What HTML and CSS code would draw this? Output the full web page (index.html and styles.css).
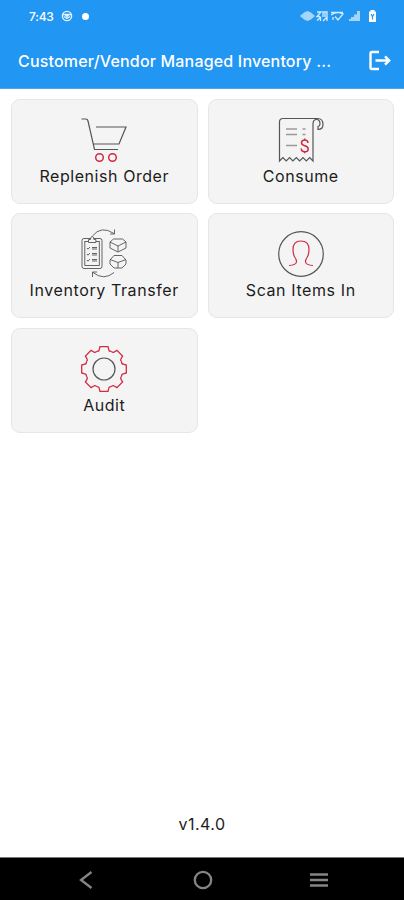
FILE: index.html
```
<!DOCTYPE html>
<html lang="en">
<head>
    <meta charset="UTF-8">
    <meta name="viewport" content="width=device-width, initial-scale=1.0">
    <title>Customer/Vendor Managed Inventory</title>
    <link rel="stylesheet" href="styles.css">
</head>
<body>
    <header class="header">
        <div class="status-bar">
            <span class="time">7:43</span>
            <svg class="status-app" width="12" height="12" viewBox="0 0 12 12">
                <circle cx="6" cy="6" r="4.6"/>
                <path d="M2 4.5h8M3 6.5l3 2 3-2M4 4.5l2 2 2-2"/>
            </svg>
            <span class="dot"></span>
            <svg class="status-icons" width="78" height="16" viewBox="0 0 78 16">
                <path class="soft" d="M0 8l4-3.5 3.500-1.500 3.500 1.500 4 3.500-4 3.500-3.500 1.500-3.500-1.500z"/>
                <path class="line" d="M17 4h4l-4 4.500h3M17 12.500l3.500-3v3.500M23 9V4h4v5l-4 4M25 5v4M27 8v5"/>
                <path class="line" d="M31 4.500h12M31 7q6-4 12-1l-5 6-3-3.500M33 9v3"/>
                <path class="soft" d="M49 13v-2h2V9h3V6.500h3V3h3v10z"/>
                <path class="fill" d="M69 3.500h1.500V2h4v1.500H76V14h-7z"/>
                <path class="bolt" d="M71 6l1.500 2.500L74 6M72.500 8.500v3"/>
            </svg>
        </div>
        <div class="title-bar">
            <h1>Customer/Vendor Managed Inventory ...</h1>
            <svg class="logout" width="24" height="22" viewBox="0 0 24 22">
                <path d="M11 2H4Q2.500 2 2.500 3.500v14Q2.500 19 4 19h7M7.500 10.500H21M17 6.300l4.200 4.200-4.200 4.200"/>
            </svg>
        </div>
    </header>

    <main class="menu">
        <a class="card">
            <svg class="icon" width="46" height="46" viewBox="0 0 46 46">
                <path d="M.500 2h4.500Q6.500 2 7 4l6.500 28.500H37M15 10h30l-7 17H12.500"/>
                <g class="red bold">
                    <circle cx="18.500" cy="40.500" r="3.800"/>
                    <circle cx="31.500" cy="40.500" r="3.800"/>
                </g>
            </svg>
            <span class="label">Replenish Order</span>
        </a>
        <a class="card">
            <svg class="icon" width="46" height="46" viewBox="0 0 46 46">
                <path d="M1.500 44V5q0-3.500 3.500-3.500h34.500q5.500 0 5.500 6 0 5-5 5v-3q2-.500 2-2.500 0-4.500-3.500-4.500-3.500 0-3.500 4.500V44l-3.300-3.500-3.400 3.500-3.300-3.500-3.400 3.500-3.300-3.500-3.400 3.500-3.300-3.500-3.400 3.500-3.300-3.500z"/>
                <path class="grey" d="M8 12h11M8 17.500h11M8 28.500h11M24.500 12h3M24.500 17.500h3"/>
                <path class="red bold" d="M30 26q-.200-3-3.300-3-3.200 0-3.200 2.800 0 2.200 3.200 2.900 3.500.800 3.500 3.200 0 2.800-3.500 2.800-3.400 0-3.500-3.200M26.700 21.500V23M26.700 34.700v1.500"/>
            </svg>
            <span class="label">Consume</span>
        </a>
        <a class="card">
            <svg class="icon transfer" width="46" height="50" viewBox="0 0 46 50">
                <g class="thin">
                    <rect x="1" y="9.500" width="20" height="30" rx="2"/>
                    <rect x="3.800" y="12.500" width="14.500" height="24"/>
                    <path class="clip" d="M7.500 13.500v-3h2q0-3 1.700-3t1.700 3h2v3z"/>
                    <path d="M6 19l1 1.200 2-2.200M6 25l1 1.200 2-2.200M6 31l1 1.200 2-2.200M11 18.500h5M11 20h5M11 24.500h5M11 26h5M11 30.500h5M11 32h5"/>
                    <path d="M11.500 7Q20-4 33 4.500M33.500.500V5H29"/>
                    <path d="M33 43.500Q23 52 12 43.500M11.500 48v-5H16"/>
                    <path d="M29 13l3.500-3h9l3.500 3v6l-8 4-8-4zM29 13l8 4 8-4M37 17v6"/>
                    <path d="M29 31l4-4.500h8l4 4.500v4l-4 4h-8l-4-4zM29 30.500l8 3 8-3M37 33.500v5.500"/>
                </g>
            </svg>
            <span class="label wide">Inventory Transfer</span>
        </a>
        <a class="card">
            <svg class="icon" width="46" height="46" viewBox="0 0 46 46">
                <circle cx="23" cy="23" r="22.300"/>
                <path class="red" d="M11 34.500q7-.500 7.500-3.500 0-2.500-1.500-4.500-2-3-2-8 0-8.500 8-8.500t8 8.500q0 5-2 8-1.500 2-1.500 4.500.5 3 7.500 3.500"/>
            </svg>
            <span class="label wide">Scan Items In</span>
        </a>
        <a class="card">
            <svg class="icon" width="46" height="46" viewBox="-23 -23 46 46">
                <defs>
                    <path id="tooth" d="M-7.300-17.600Q-5-17.500-4.800-19.200L-4-22.300H4L4.800-19.200Q5-17.500 7.300-17.600"/>
                </defs>
                <circle r="11"/>
                <g class="red gear">
                    <use href="#tooth"/>
                    <use href="#tooth" transform="rotate(45)"/>
                    <use href="#tooth" transform="rotate(90)"/>
                    <use href="#tooth" transform="rotate(135)"/>
                    <use href="#tooth" transform="rotate(180)"/>
                    <use href="#tooth" transform="rotate(225)"/>
                    <use href="#tooth" transform="rotate(270)"/>
                    <use href="#tooth" transform="rotate(315)"/>
                </g>
            </svg>
            <span class="label">Audit</span>
        </a>
    </main>

    <p class="version">v1.4.0</p>

    <nav class="nav-bar">
        <svg width="20" height="20" viewBox="0 0 20 20"><path d="M15.500 2L5 10l10.500 8"/></svg>
        <svg width="20" height="20" viewBox="0 0 20 20"><circle cx="10" cy="10" r="8.200"/></svg>
        <svg width="20" height="20" viewBox="0 0 20 20"><path d="M1 4.500h18M1 10h18M1 15.500h18"/></svg>
    </nav>
</body>
</html>
```
FILE: styles.css
```
* {
    box-sizing: border-box;
}

body {
    margin: 0;
    height: 900px;
    display: flex;
    flex-direction: column;
    background-color: #fff;
    color: #1c1c1c;
    font-family: Inter, Roboto, sans-serif;
}

svg {
    fill: none;
    flex-shrink: 0;
}

.header {
    height: 89px;
    background-color: #2196f3;
    border-bottom: 1px solid #4aa7ee;
    color: #fff;
}

.status-bar {
    display: flex;
    align-items: center;
    height: 32px;
    padding: 0 26px 0 29px;
}

.time {
    width: 25px;
    font-size: 12px;
    font-weight: 500;
    letter-spacing: -0.2px;
    white-space: nowrap;
}

.status-app {
    margin-left: 7px;
    stroke: #e3f2fd;
    stroke-width: 1.4;
}

.dot {
    width: 7px;
    height: 7px;
    margin-left: 9px;
    border-radius: 50%;
    background-color: #fff;
}

.status-icons {
    margin-left: auto;
}

.soft {
    fill: #a6d5fa;
}

.fill {
    fill: #fff;
}

.line {
    stroke: #d5ecfd;
    stroke-width: 1.3;
}

.bolt {
    stroke: #2196f3;
    stroke-width: 1.2;
}

.title-bar {
    display: flex;
    align-items: center;
    justify-content: space-between;
    height: 58px;
    padding: 0 12px 0 18px;
}

h1 {
    margin: 0;
    font-size: 16px;
    font-weight: 500;
    letter-spacing: 0.18px;
    white-space: nowrap;
}

.logout {
    stroke: #fff;
    stroke-width: 2.4;
}

.menu {
    display: grid;
    grid-template-columns: 1fr 1fr;
    grid-auto-rows: 105px;
    gap: 9.3px 10px;
    padding: 10px 10px 0 11px;
}

.card {
    display: flex;
    flex-direction: column;
    align-items: center;
    padding-top: 17px;
    background-color: #f4f4f4;
    border: 1px solid #e6e6e6;
    border-radius: 9px;
}

.icon {
    stroke: #555;
    stroke-width: 1.2;
}

.transfer {
    margin: -2px 0;
}

.thin {
    stroke-width: 0.9;
}

.grey {
    stroke: #999;
    stroke-width: 1.5;
}

.red {
    stroke: #d02a42;
}

.bold {
    stroke-width: 1.5;
}

.gear {
    stroke-width: 1.3;
}

.clip {
    fill: #f4f4f4;
}

.label {
    margin-top: 2px;
    font-size: 16px;
    line-height: 22px;
    letter-spacing: 0.56px;
    white-space: nowrap;
}

.wide {
    letter-spacing: 0.6px;
}

.version {
    margin: auto 0 21px;
    font-size: 16px;
    line-height: 24px;
    letter-spacing: 0.5px;
    text-align: center;
}

.nav-bar {
    display: flex;
    justify-content: space-between;
    align-items: center;
    height: 43px;
    padding: 1px 75px 0 76px;
    background-color: #000;
    border-top: 1px solid #777;
    stroke: #858585;
    stroke-width: 2.3;
}
```
